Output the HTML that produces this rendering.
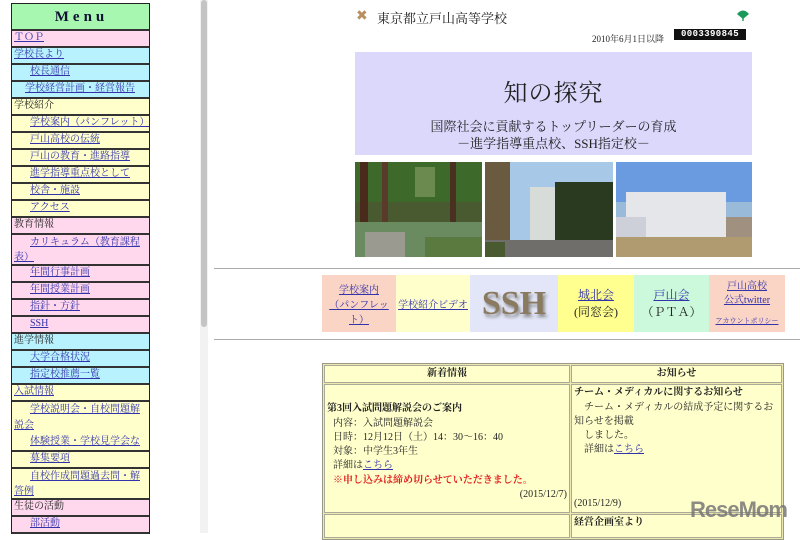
<!DOCTYPE html>
<html><head><meta charset="utf-8"><style>
body{margin:0;width:800px;height:533px;overflow:hidden;background:#fff;font-family:"Liberation Serif","Noto Serif CJK SC",serif;position:relative;font-size:10px;color:#222}
a{color:#3333aa;text-decoration:underline}
#menu{position:absolute;left:11px;top:3px;width:137px;border:1px solid #222;border-bottom:none}
#menu>div{border-bottom:2px solid #333;box-sizing:border-box;height:17px;line-height:14px;padding-left:2px;font-size:10px;overflow:hidden}
#menu .h{height:27px;background:#a8f7b0;text-align:center;font-size:15px;font-weight:bold;letter-spacing:4px;line-height:26px;color:#113}
.p{background:#ffd8ee}.c{background:#b8f2ff}.y{background:#ffffcc}
#menu .i{padding-left:18px}
#scroll{position:absolute;left:200px;top:0;width:8px;height:533px;background:#f2f2f2}
#scroll div{position:absolute;left:1px;top:0;width:6px;height:327px;background:#c4c4c4;border-radius:3px}
.abs{position:absolute}
.hr{position:absolute;left:214px;width:586px;height:1px;background:#aaa}
.lb{position:absolute;top:275px;height:57px;text-align:center;font-size:10px;display:flex;flex-direction:column;justify-content:center}
table{position:absolute;left:322px;top:363px;width:462px;border-collapse:separate;border-spacing:1px;background:#eee8b0;border:1px solid #998;font-size:10px}
td{background:#ffffcc;border:1px solid #aa9;vertical-align:top;padding:1px 2px;line-height:14.3px}
</style></head><body>
<div id="menu">
<div class="h">Menu</div>
<div class="p"><a>ＴＯＰ</a></div>
<div class="c"><a>学校長より</a></div>
<div class="c i"><a>校長通信</a></div>
<div class="c" style="padding-left:13px"><a>学校経営計画・経営報告</a></div>
<div class="y">学校紹介</div>
<div class="y i"><a>学校案内（パンフレット）</a></div>
<div class="y i"><a>戸山高校の伝統</a></div>
<div class="y i"><a>戸山の教育・進路指導</a></div>
<div class="y i"><a>進学指導重点校として</a></div>
<div class="y i"><a>校舎・施設</a></div>
<div class="y i"><a>アクセス</a></div>
<div class="p">教育情報</div>
<div class="p" style="height:31px;text-indent:16px;padding-left:2px;line-height:15px"><a>カリキュラム（教育課程表）</a></div>
<div class="p i"><a>年間行事計画</a></div>
<div class="p i"><a>年間授業計画</a></div>
<div class="p i"><a>指針・方針</a></div>
<div class="p i"><a>SSH</a></div>
<div class="c">進学情報</div>
<div class="c i"><a>大学合格状況</a></div>
<div class="c i"><a>指定校推薦一覧</a></div>
<div class="y"><a>入試情報</a></div>
<div class="y" style="height:50px;line-height:16px"><div style="text-indent:16px"><a>学校説明会・自校問題解説会</a></div><div style="padding-left:16px"><a>体験授業・学校見学会など</a></div></div>
<div class="y i"><a>募集要項</a></div>
<div class="y" style="height:31px;text-indent:16px;line-height:15px"><a>自校作成問題過去問・解答例</a></div>
<div class="p">生徒の活動</div>
<div class="p i"><a>部活動</a></div>
</div>
<div id="scroll"><div></div></div>

<div class="abs" style="left:356px;top:8px;color:#b89060;font-size:14px">✖</div>
<div class="abs" style="left:377px;top:8px;font-size:13px">東京都立戸山高等学校</div>
<svg class="abs" style="left:736px;top:8px" width="14" height="14"><path d="M1 6 Q7 -1 13 6 L7 11 Z" fill="#1a9a5a"/><rect x="6.3" y="9" width="1.4" height="4" fill="#1a9a5a"/></svg>
<div class="abs" style="left:592px;top:32px;font-size:9px">2010年6月1日以降</div>
<div class="abs" style="left:674px;top:29px;width:72px;height:11px;background:#111;color:#fff;font:bold 9px 'Liberation Mono',monospace;letter-spacing:0.4px;line-height:11px;text-align:center">0003390845</div>

<div class="abs" style="left:355px;top:52px;width:397px;height:103px;background:#dcd8fc;text-align:center">
<div style="font-size:24px;margin-top:21px;letter-spacing:1px">知の探究</div>
<div style="font-size:13px;margin-top:10px;line-height:17px">国際社会に貢献するトップリーダーの育成<br>－進学指導重点校、SSH指定校－</div>
</div>

<svg class="abs" style="left:355px;top:162px" width="127" height="95"><rect width="127" height="95" fill="#4a5a30"/><rect x="0" y="0" width="127" height="40" fill="#3d6a2a"/><rect x="60" y="5" width="20" height="30" fill="#6a8a50"/><rect x="5" y="0" width="8" height="80" fill="#4a2a1a"/><rect x="27" y="0" width="6" height="60" fill="#5a3a2a"/><rect x="95" y="0" width="6" height="70" fill="#4a3020"/><rect x="0" y="60" width="127" height="35" fill="#6a8a60"/><rect x="10" y="70" width="40" height="25" fill="#9a9a90"/><rect x="70" y="75" width="57" height="20" fill="#5a7a40"/></svg>
<svg class="abs" style="left:485px;top:162px" width="128" height="95"><rect width="128" height="95" fill="#a8c8e8"/><rect x="0" y="0" width="25" height="80" fill="#6a5a40"/><rect x="45" y="25" width="60" height="55" fill="#d8dcd8"/><rect x="70" y="20" width="58" height="65" fill="#2a3a20"/><rect x="0" y="78" width="128" height="17" fill="#706e6a"/><rect x="0" y="80" width="20" height="15" fill="#4a5a30"/></svg>
<svg class="abs" style="left:616px;top:162px" width="136" height="95"><rect width="136" height="95" fill="#6a9ae0"/><rect x="0" y="40" width="136" height="30" fill="#9abada"/><rect x="10" y="30" width="100" height="48" fill="#e4e6ea"/><rect x="0" y="55" width="30" height="20" fill="#cdd0d8"/><rect x="110" y="55" width="26" height="20" fill="#a09080"/><rect x="0" y="75" width="136" height="20" fill="#b09a70"/></svg>

<div class="hr" style="top:268px"></div>
<div class="lb" style="left:322px;width:74px;background:#fad4c4"><a>学校案内<br>（パンフレット）</a></div>
<div class="lb" style="left:396px;width:74px;background:#ffffcc"><a>学校紹介ビデオ</a></div>
<div class="lb" style="left:470px;width:88px;background:#e2e6f8;font:bold 34px 'Liberation Serif',serif;color:#8a7a60;text-shadow:2px 3px 3px #888">SSH</div>
<div class="lb" style="left:558px;width:76px;background:#ffff90;font-size:12px;line-height:17px"><a>城北会</a>(同窓会)</div>
<div class="lb" style="left:634px;width:75px;background:#ccf8dc;font-size:12px;line-height:17px"><a>戸山会</a>（ＰＴＡ）</div>
<div class="lb" style="left:709px;width:76px;background:#fad4c4;line-height:14px"><a>戸山高校<br>公式twitter</a><a style="font-size:7px;margin-top:6px">アカウントポリシー</a></div>
<div class="hr" style="top:339px"></div>

<table>
<tr><td style="width:240px;text-align:center;font-weight:bold;height:14px">新着情報</td><td style="text-align:center;font-weight:bold">お知らせ</td></tr>
<tr><td style="height:125px"><div style="margin-top:16px;font-weight:bold">第3回入試問題解説会のご案内</div><div style="padding-left:6px">内容：入試問題解説会<br>日時：12月12日（土）14：30～16：40<br>対象：中学生3年生<br>詳細は<a>こちら</a><br><span style="color:#e02020;font-weight:bold">※申し込みは締め切らせていただきました。</span></div><div style="text-align:right">(2015/12/7)</div></td>
<td style="position:relative"><b>チーム・メディカルに関するお知らせ</b><br>　チーム・メディカルの結成予定に関するお知らせを掲載<br>　しました。<br>　詳細は<a>こちら</a><div style="position:absolute;bottom:1px;left:2px">(2015/12/9)</div></td></tr>
<tr><td style="height:20px"></td><td><b>経営企画室より</b></td></tr>
</table>
<div class="abs" style="left:690px;top:497px;font:bold 22px 'Liberation Sans',sans-serif;color:#777;opacity:.85;letter-spacing:-1px">ReseMom</div>
</body></html>
